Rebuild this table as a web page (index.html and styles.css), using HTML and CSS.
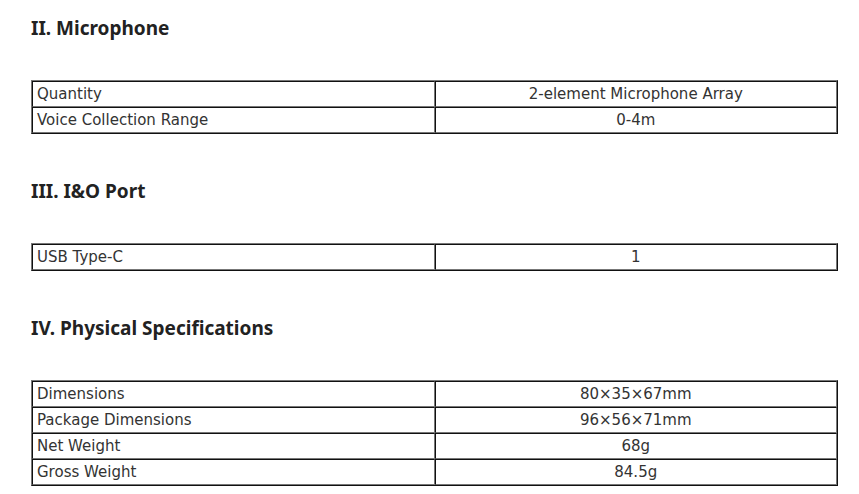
FILE: index.html
```html
<!DOCTYPE html>
<html lang="en">

<head>
    <meta charset="UTF-8">
    <meta name="viewport" content="width=device-width, initial-scale=1.0">
    <title>Specifications</title>
    <link rel="stylesheet" href="styles.css">
</head>

<body>
    <div class="specs">
        <h2 class="spec-title">II. Microphone</h2>
        <table class="spec-table">
            <tr><td>Quantity</td><td>2-element Microphone Array</td></tr>
            <tr><td>Voice Collection Range</td><td>0-4m</td></tr>
        </table>

        <h2 class="spec-title">III. I&amp;O Port</h2>
        <table class="spec-table">
            <tr><td>USB Type-C</td><td>1</td></tr>
        </table>

        <h2 class="spec-title">IV. Physical Specifications</h2>
        <table class="spec-table">
            <tr><td>Dimensions</td><td>80×35×67mm</td></tr>
            <tr><td>Package Dimensions</td><td>96×56×71mm</td></tr>
            <tr><td>Net Weight</td><td>68g</td></tr>
            <tr><td>Gross Weight</td><td>84.5g</td></tr>
        </table>
    </div>
</body>

</html>
```

FILE: styles.css
```css
/* Page */
body {
    margin: 0;
    background: #fff;
    color: #333;
}

.specs {
    padding: 16px 21px 0 31px;
}

/* Section headings */
.spec-title {
    margin: 0;
    font-family: "Noto Sans", sans-serif;
    font-size: 19px;
    font-weight: bold;
    color: #222;
    line-height: 24px;
    padding-bottom: 40px;
}

/* Spec tables */
.spec-table {
    width: 100%;
    border-collapse: separate;
    border-spacing: 0;
    border: 1px solid;
    border-color: #777 #111 #111 #777;
    margin-bottom: 45px;
    font-family: "DejaVu Sans", sans-serif;
    font-size: 15px;
    color: #333;
}

.spec-table td {
    width: 50%;
    height: 24px;
    padding: 0 4px;
    border: 1px solid;
    border-color: #111 #777 #777 #111;
    line-height: 24px;
}

.spec-table td + td {
    text-align: center;
}
```
